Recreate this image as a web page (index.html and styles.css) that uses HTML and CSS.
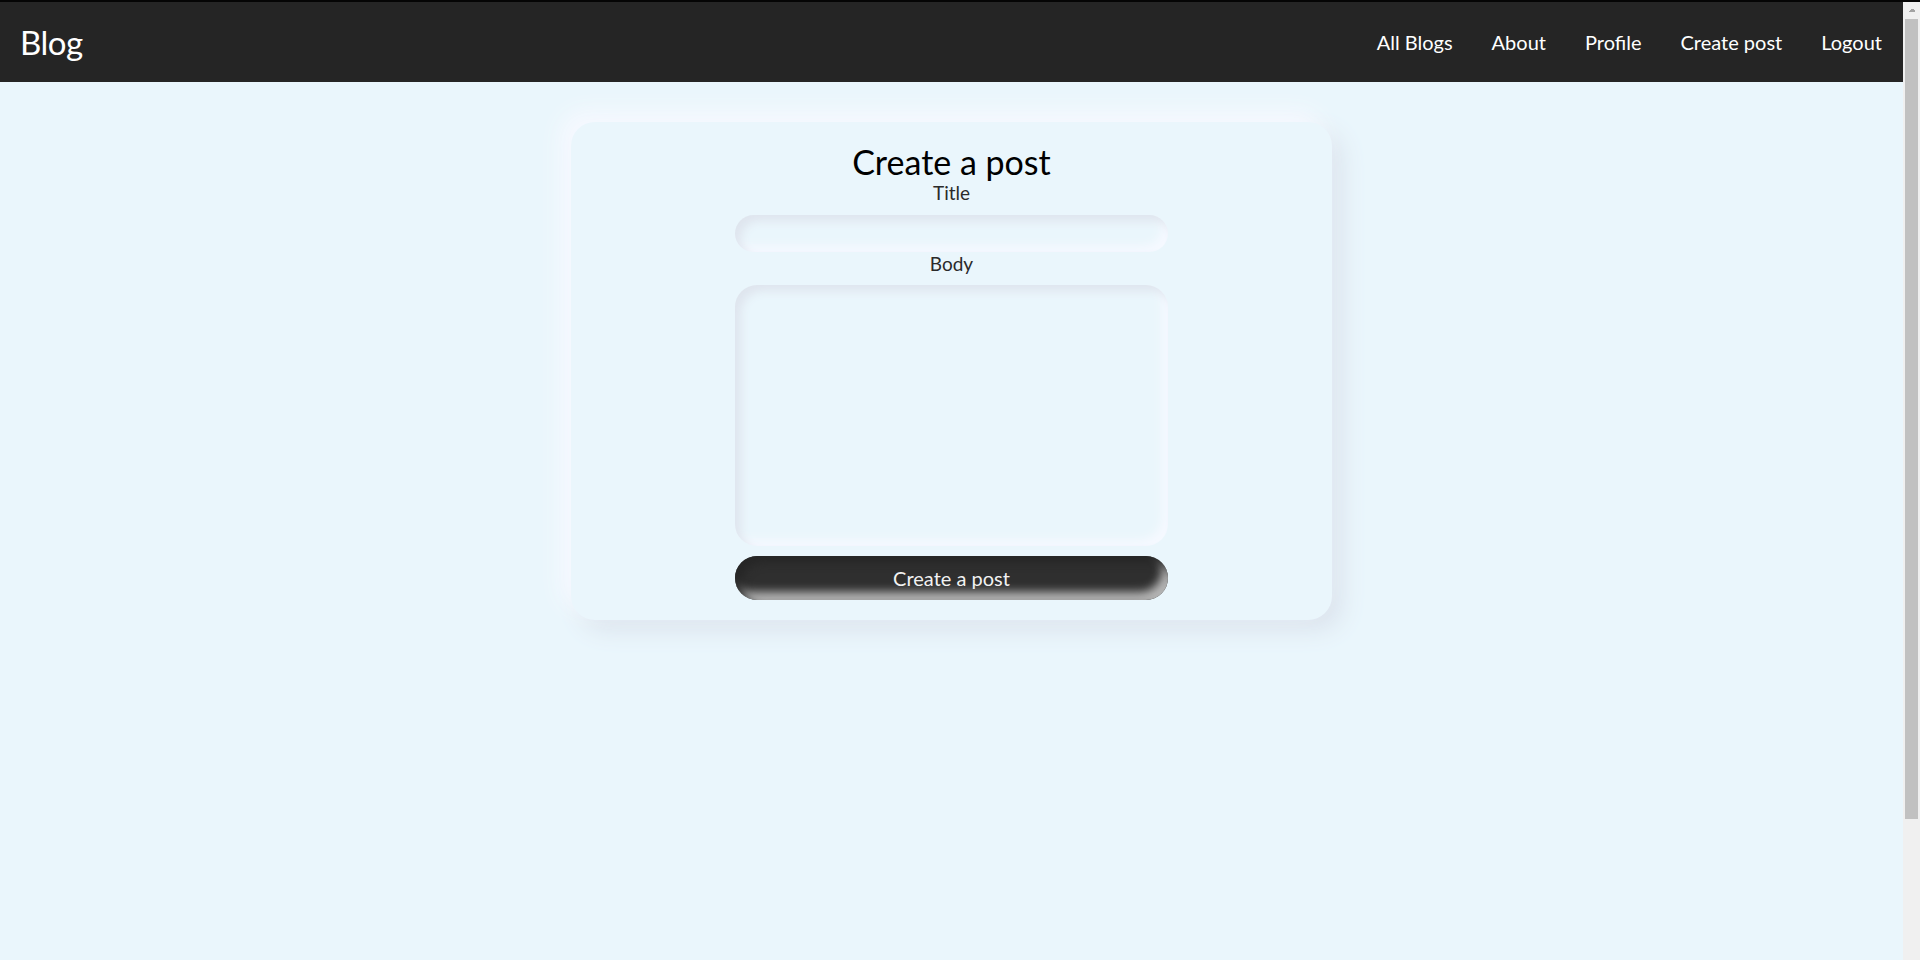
FILE: index.html
```html
<!DOCTYPE html>
<html lang="en">
<head>
<meta charset="utf-8">
<title>Blog - Create a post</title>
<link rel="stylesheet" href="styles.css">
</head>
<body>
<div class="app">
  <nav class="topbar">
    <a class="brand" href="#">Blog</a>
    <ul class="links">
      <li><a href="#">All Blogs</a></li>
      <li><a href="#">About</a></li>
      <li><a href="#">Profile</a></li>
      <li><a href="#">Create post</a></li>
      <li><a href="#">Logout</a></li>
    </ul>
  </nav>
  <main class="page">
    <form class="card">
      <h1 class="card-title">Create a post</h1>
      <label class="field-label" for="title">Title</label>
      <input class="field field-input" id="title" type="text">
      <label class="field-label" for="body">Body</label>
      <textarea class="field field-area" id="body"></textarea>
      <button class="submit" type="button">Create a post</button>
    </form>
  </main>
</div>
<div class="scrollbar" aria-hidden="true">
  <div class="scroll-arrow"></div>
  <div class="scroll-thumb"></div>
</div>
</body>
</html>
```
FILE: styles.css
```css
html {
  background: #eaf6fc;
}
body {
  margin: 0;
  border-top: 2px solid #050505;
  font-family: Lato, "Noto Sans", sans-serif;
  background: #eaf6fc;
}
.app {
  margin-right: 17px;
}

.topbar {
  box-sizing: border-box;
  height: 80px;
  background: #252525;
  display: flex;
  align-items: center;
  justify-content: space-between;
  padding: 0 21px 0 20px;
}
.brand {
  color: #ffffff;
  text-decoration: none;
  font-size: 33px;
  letter-spacing: -0.5px;
}
.links {
  list-style: none;
  margin: 0;
  padding: 0;
  display: flex;
  gap: 39px;
}
.links a {
  color: #ffffff;
  text-decoration: none;
  font-size: 20px;
}

.page {
  box-sizing: border-box;
  min-height: 1048px;
  padding-top: 40px;
  display: flex;
  flex-direction: column;
  align-items: center;
}
.card {
  box-sizing: border-box;
  width: 761px;
  padding: 21px 0 20px;
  border-radius: 24px;
  background: #eaf6fc;
  box-shadow: -10px -10px 22px #f7f9ff, 10px 10px 24px #dbe3ed;
  display: flex;
  flex-direction: column;
  align-items: center;
}
.card-title {
  margin: 0;
  font-size: 34px;
  font-weight: 400;
  line-height: 38px;
  color: #000;
}
.field-label {
  display: block;
  font-size: 19px;
  line-height: 24px;
  color: #2a2a2a;
}
.field {
  box-sizing: border-box;
  width: 433px;
  border: none;
  outline: none;
  background: #eaf6fc;
  font-family: inherit;
  font-size: 18px;
  box-shadow: inset 6px 6px 10px #dfe5ee, inset -6px -6px 10px #f6f9ff;
}
.field-input {
  height: 37px;
  margin-top: 10px;
  border-radius: 19px;
}
.field-area {
  height: 261px;
  margin-top: 9px;
  border-radius: 22px;
  resize: none;
}
.submit {
  width: 433px;
  height: 44px;
  margin-top: 10px;
  border: none;
  border-radius: 22px;
  background: #2f2f2f;
  color: #f2f2f2;
  font-family: inherit;
  font-size: 20px;
  box-shadow: inset 6px 6px 10px #262626, inset -6px -8px 10px #b8b8b8;
}

.scrollbar {
  position: fixed;
  top: 2px;
  right: 0;
  bottom: 0;
  width: 17px;
  background: #f0f0f0;
}
.scroll-arrow {
  height: 17px;
  background:
    linear-gradient(to top left, #a3a3a3 50%, transparent 50%) 4.5px 6px / 4px 4px no-repeat,
    linear-gradient(to top right, #a3a3a3 50%, transparent 50%) 8.5px 6px / 4px 4px no-repeat;
}
.scroll-thumb {
  height: 800px;
  margin: 0 2px;
  background: #c1c1c1;
}
```
